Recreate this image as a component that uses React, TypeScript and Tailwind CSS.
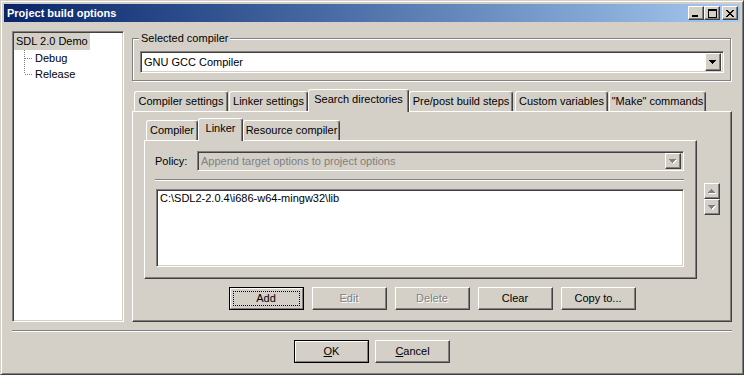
import React from 'react';

const raised =
  'border border-t-white border-l-white border-r-[#404040] border-b-[#404040] shadow-[inset_-1px_-1px_#808080]';
const sunken =
  'border border-t-[#808080] border-l-[#808080] border-r-white border-b-white shadow-[inset_1px_1px_#404040,inset_-1px_-1px_#d4d0c8]';

const Arrow = ({ up = false, disabled = false }: { up?: boolean; disabled?: boolean }) => {
  const d = up
    ? 'M3 0h1v1H3z M2 1h3v1H2z M1 2h5v1H1z M0 3h7v1H0z'
    : 'M0 0h7v1H0z M1 1h5v1H1z M2 2h3v1H2z M3 3h1v1H3z';
  return (
    <svg width="8" height="5" viewBox="0 0 8 5" shapeRendering="crispEdges">
      {disabled && <path d={d} fill="#fff" transform="translate(1 1)" />}
      <path d={d} fill={disabled ? '#808080' : '#000'} />
    </svg>
  );
};

const Button = ({
  children,
  disabled = false,
  isDefault = false,
  focused = false,
}: {
  children: React.ReactNode;
  disabled?: boolean;
  isDefault?: boolean;
  focused?: boolean;
}) => {
  const text = disabled ? 'text-[#808080] [text-shadow:1px_1px_0_#fff]' : 'text-black';
  if (isDefault) {
    return (
      <div className="w-[75px] h-[23px] border border-black bg-[#d4d0c8]">
        <div className="relative w-full h-full border border-t-white border-l-white border-r-[#808080] border-b-[#808080] flex items-center justify-center">
          {focused && <span className="absolute inset-[2px] border border-dotted border-black" />}
          <span className={text}>{children}</span>
        </div>
      </div>
    );
  }
  return (
    <div className={`w-[75px] h-[23px] bg-[#d4d0c8] flex items-center justify-center ${raised}`}>
      <span className={text}>{children}</span>
    </div>
  );
};

const Tab = ({ label, cls, sel = false }: { label: string; cls: string; sel?: boolean }) => (
  <div
    className={`relative flex justify-center bg-[#d4d0c8] border-l border-t border-r border-l-white border-t-white border-r-[#404040] shadow-[inset_-1px_0_#808080] rounded-t-[3px] whitespace-nowrap ${cls} ${
      sel ? 'h-[23px] -mb-px z-10 pt-[3px]' : 'h-[20px] pt-[3px]'
    }`}
  >
    {label}
  </div>
);

const outerTabs = [
  { label: 'Compiler settings', cls: 'w-[94px] ml-[2px]' },
  { label: 'Linker settings', cls: 'w-[79px] ml-[1px]' },
  { label: 'Search directories', cls: 'w-[101px]', sel: true },
  { label: 'Pre/post build steps', cls: 'w-[104px]' },
  { label: 'Custom variables', cls: 'w-[93px] ml-[2px]' },
  { label: '"Make" commands', cls: 'w-[97px] ml-[1px]' },
];

const innerTabs = [
  { label: 'Compiler', cls: 'w-[52px] ml-[2px]' },
  { label: 'Linker', cls: 'w-[45px]', sel: true },
  { label: 'Resource compiler', cls: 'w-[97px]' },
];

const TreeBranch = ({ last }: { last?: boolean }) => (
  <svg width="20" height="16" viewBox="0 0 20 16" shapeRendering="crispEdges" className="shrink-0">
    <line x1="10.5" y1="0" x2="10.5" y2={last ? 8 : 16} stroke="#808080" strokeDasharray="1 1" />
    <line x1="11" y1="8.5" x2="18" y2="8.5" stroke="#808080" strokeDasharray="1 1" />
  </svg>
);

export default function App() {
  return (
    <div className="w-[744px] h-[375px] bg-[#d4d0c8] border border-t-[#d4d0c8] border-l-[#d4d0c8] border-r-[#404040] border-b-[#404040] shadow-[inset_1px_1px_#fff,inset_-1px_-1px_#808080] p-[3px] font-['Liberation_Sans',Arial,sans-serif] text-[11px] leading-[13px] text-black select-none overflow-hidden">
      {/* Title bar */}
      <div className="h-[18px] flex items-center bg-gradient-to-r from-[#0a246a] to-[#a6caf0] pl-[3px] pr-[2px]">
        <span className="font-bold text-white flex-1">Project build options</span>
        <div className="flex items-center">
          <div className={`w-[16px] h-[14px] bg-[#d4d0c8] flex items-end justify-start pl-[3px] pb-[2px] ${raised}`}>
            <div className="w-[6px] h-[2px] bg-black" />
          </div>
          <div className={`w-[16px] h-[14px] bg-[#d4d0c8] flex items-center justify-center ${raised}`}>
            <div className="w-[9px] h-[9px] border border-t-2 border-black" />
          </div>
          <div className={`ml-[2px] w-[16px] h-[14px] bg-[#d4d0c8] flex items-center justify-center ${raised}`}>
            <svg width="8" height="7" viewBox="0 0 8 7" shapeRendering="crispEdges">
              <path
                d="M0 0h2v1H0z M6 0h2v1H6z M1 1h2v1H1z M5 1h2v1H5z M2 2h4v1H2z M3 3h2v1H3z M2 4h4v1H2z M1 5h2v1H1z M5 5h2v1H5z M0 6h2v1H0z M6 6h2v1H6z"
                fill="#000"
              />
            </svg>
          </div>
        </div>
      </div>

      {/* Body */}
      <div className="px-[8px] pt-[9px]">
        <div className="flex h-[291px] gap-[8px]">
          {/* Tree */}
          <div className={`w-[112px] h-full bg-white ${sunken} p-[1px]`}>
            <div className="flex flex-col">
              <div className="h-[17px] flex items-center">
                <span className="bg-[#d4d0c8] px-[2px] h-[17px] flex items-center whitespace-nowrap">SDL 2.0 Demo</span>
              </div>
              <div className="h-[16px] flex items-center">
                <TreeBranch />
                <span className="ml-[1px]">Debug</span>
              </div>
              <div className="h-[16px] flex items-center">
                <TreeBranch last />
                <span className="ml-[1px]">Release</span>
              </div>
            </div>
          </div>

          {/* Right column */}
          <div className="w-[600px] pt-[7px] flex flex-col">
            {/* Selected compiler group */}
            <div className="relative w-[599px] h-[43px] border border-[#808080] shadow-[inset_1px_1px_#fff,1px_1px_#fff] pl-[7px] pt-[12px]">
              <span className="absolute left-[6px] -top-[7px] px-[2px] bg-[#d4d0c8]">Selected compiler</span>
              <div className={`w-[584px] h-[22px] bg-white ${sunken} flex items-center pl-[3px] pr-[2px]`}>
                <span className="flex-1">GNU GCC Compiler</span>
                <div className={`w-[16px] h-[18px] bg-[#d4d0c8] flex items-center justify-center ${raised}`}>
                  <Arrow />
                </div>
              </div>
            </div>

            {/* Outer tabs */}
            <div className="mt-[8px] flex items-end h-[22px]">
              {outerTabs.map((t) => (
                <Tab key={t.label} {...t} />
              ))}
            </div>
            <div className={`w-[600px] h-[211px] bg-[#d4d0c8] ${raised} pl-[11px] pt-[8px]`}>
              <div className="flex">
                <div className="w-[553px]">
                  <div className="flex items-end h-[20px]">
                    {innerTabs.map((t) => (
                      <Tab key={t.label} {...t} />
                    ))}
                  </div>
                  <div className={`h-[139px] ${raised} pl-[10px] pr-[12px] pt-[10px]`}>
                    <div className="flex items-center h-[20px]">
                      <span className="w-[42px]">Policy:</span>
                      <div className={`flex-1 h-[20px] bg-[#d4d0c8] ${sunken} flex items-center pl-[3px] pr-[2px]`}>
                        <span className="flex-1 text-[#808080]">Append target options to project options</span>
                        <div className={`w-[16px] h-[16px] bg-[#d4d0c8] flex items-center justify-center ${raised}`}>
                          <Arrow disabled />
                        </div>
                      </div>
                    </div>
                    <div className="mt-[8px] h-[2px] border-t border-t-[#808080] border-b border-b-white" />
                    <div className={`mt-[8px] ml-[1px] h-[78px] bg-white ${sunken} pl-[3px] pt-[2px]`}>
                      C:\SDL2-2.0.4\i686-w64-mingw32\lib
                    </div>
                  </div>
                </div>
                <div className="ml-[7px] pt-[63px] flex flex-col">
                  <div className={`w-[16px] h-[16px] bg-[#d4d0c8] flex items-center justify-center ${raised}`}>
                    <Arrow up disabled />
                  </div>
                  <div className={`w-[16px] h-[16px] bg-[#d4d0c8] flex items-center justify-center ${raised}`}>
                    <Arrow disabled />
                  </div>
                </div>
              </div>
              <div className="mt-[8px] -ml-[11px] flex justify-center gap-[8px]">
                <Button isDefault focused>
                  Add
                </Button>
                <Button disabled>Edit</Button>
                <Button disabled>Delete</Button>
                <Button>Clear</Button>
                <Button>Copy to...</Button>
              </div>
            </div>
          </div>
        </div>

        {/* Separator */}
        <div className="mt-[8px] h-[2px] border-t border-t-[#808080] border-b border-b-white" />

        {/* Dialog buttons */}
        <div className="mt-[8px] flex justify-center gap-[6px]">
          <Button isDefault>
            <span className="underline">O</span>K
          </Button>
          <Button>
            <span className="underline">C</span>ancel
          </Button>
        </div>
      </div>
    </div>
  );
}
